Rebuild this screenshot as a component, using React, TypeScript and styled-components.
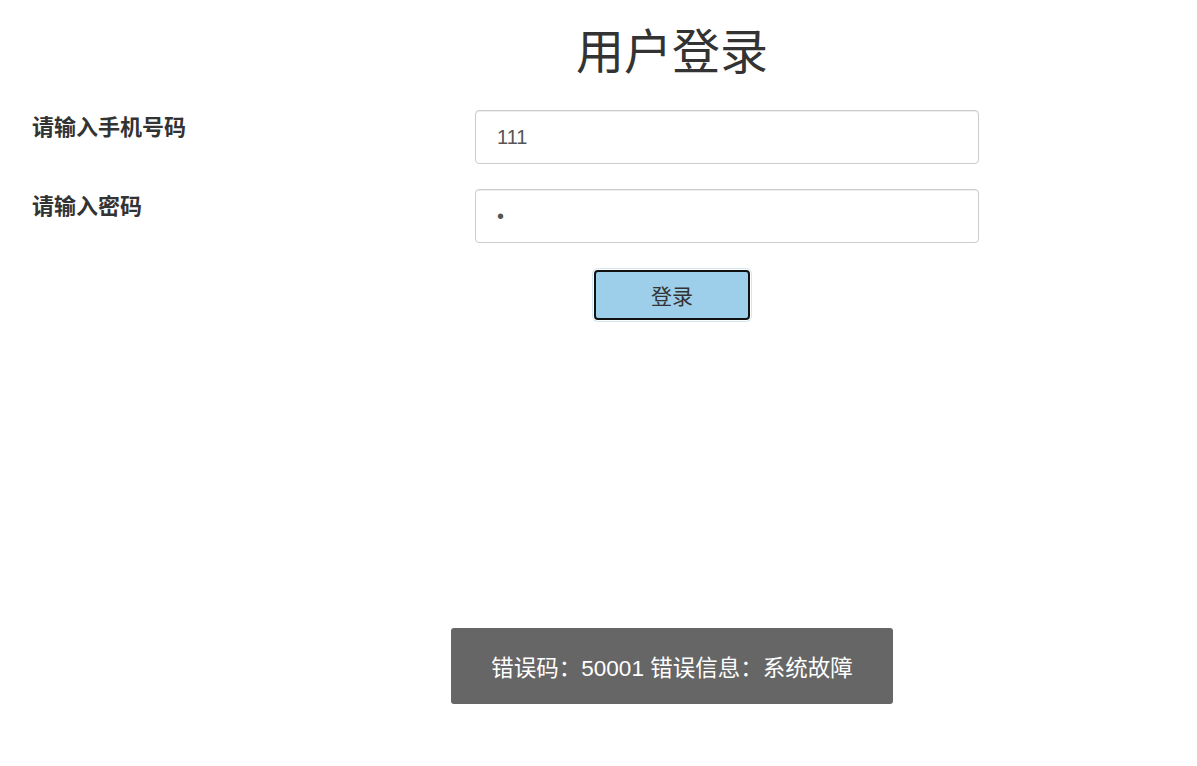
import styled, { createGlobalStyle } from "styled-components";

const GlobalStyle = createGlobalStyle`
  html, body {
    margin: 0;
    padding: 0;
    background: #fff;
    font-family: "Liberation Sans", "Noto Sans CJK SC", sans-serif;
    color: #333;
  }
  * {
    box-sizing: border-box;
  }
`;

const Page = styled.div`
  position: relative;
  width: 1197px;
  height: 766px;
  overflow: hidden;
`;

const Title = styled.h1`
  margin: 16px 0 0;
  padding-left: 147px;
  text-align: center;
  font-family: "Noto Sans CJK SC", sans-serif;
  font-size: 48px;
  font-weight: 400;
  line-height: 64px;
  color: #333;
`;

const Form = styled.form`
  display: flex;
  flex-direction: column;
  gap: 25px;
  margin-top: 30px;
`;

const Row = styled.div`
  display: flex;
  align-items: flex-start;
  padding-left: 32px;
`;

const Label = styled.label`
  width: 443px;
  padding-top: 0;
  font-family: "Noto Sans CJK SC", sans-serif;
  font-size: 22px;
  font-weight: 700;
  line-height: 30px;
  color: #333;
`;

const Input = styled.input`
  width: 504px;
  height: 54px;
  padding: 0 21px;
  border: 1px solid #ccc;
  border-radius: 4px;
  box-shadow: inset 0 1px 1px rgba(0, 0, 0, 0.075);
  font-family: "Liberation Sans", "Noto Sans CJK SC", sans-serif;
  font-size: 20px;
  color: #555;
  outline: none;
  background: #fff;
`;

const ButtonRow = styled.div`
  display: flex;
  justify-content: center;
  padding-left: 147px;
`;

const SubmitButton = styled.button`
  width: 156px;
  height: 50px;
  margin-top: 2px;
  border: 2px solid #111;
  border-radius: 4px;
  background: #9dcfea;
  box-shadow: 0 0 0 1px #fff, 0 0 0 2px #d3e6f2;
  font-family: "Noto Sans CJK SC", sans-serif;
  font-size: 21px;
  color: #333;
  cursor: pointer;
`;

const Toast = styled.div`
  position: absolute;
  left: 451px;
  top: 628px;
  width: 442px;
  height: 76px;
  display: flex;
  align-items: center;
  justify-content: center;
  background: #666;
  border-radius: 3px;
  color: #fff;
  font-family: "Liberation Sans", "Noto Sans CJK SC", sans-serif;
  font-size: 22.5px;
`;

export default function App() {
  return (
    <Page>
      <GlobalStyle />
      <Title>用户登录</Title>
      <Form onSubmit={(e) => e.preventDefault()}>
        <Row>
          <Label htmlFor="phone">请输入手机号码</Label>
          <Input id="phone" type="text" defaultValue="111" />
        </Row>
        <Row>
          <Label htmlFor="pwd">请输入密码</Label>
          <Input id="pwd" type="password" defaultValue="1" />
        </Row>
        <ButtonRow>
          <SubmitButton type="submit">登录</SubmitButton>
        </ButtonRow>
      </Form>
      <Toast>错误码：50001 错误信息：系统故障</Toast>
    </Page>
  );
}
